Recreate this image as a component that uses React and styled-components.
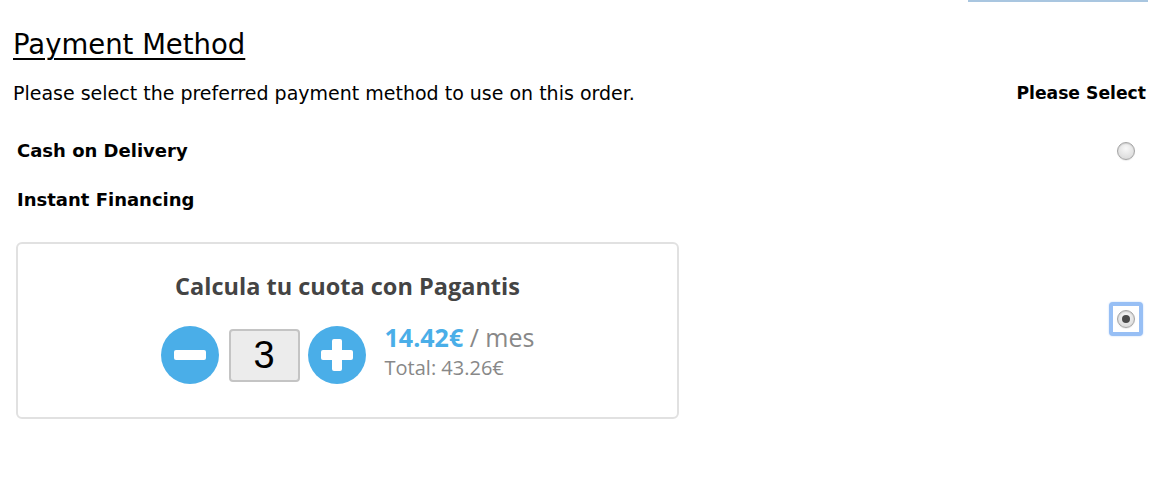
import React, { useState } from "react"
import styled, { createGlobalStyle } from "styled-components"

const GlobalStyle = createGlobalStyle`
  body {
    margin: 0;
    background: #fff;
    font-family: "DejaVu Sans", "Liberation Sans", sans-serif;
    color: #000;
  }
`

const Page = styled.div`
  padding: 0 12px 0 13px;
`

const TopLine = styled.div`
  height: 2px;
  width: 180px;
  margin-left: auto;
  background: #a9c6e0;
`

const Heading = styled.h2`
  margin: 26px 0 0;
  font-size: 27.5px;
  font-weight: normal;
  text-decoration: underline;
  text-decoration-thickness: 2px;
  text-underline-offset: 4px;
  line-height: 32px;
`

const InfoRow = styled.div`
  display: flex;
  justify-content: space-between;
  align-items: center;
  margin-top: 22px;
  font-size: 19px;
  line-height: 22px;
`

const SelectHint = styled.span`
  font-weight: bold;
  font-size: 17.2px;
  margin-right: 2px;
`

const OptionRow = styled.div`
  display: flex;
  justify-content: space-between;
  align-items: center;
  padding-left: 4px;
  margin-top: ${(p) => p.$gap}px;
  line-height: 22px;
`

const OptionLabel = styled.span`
  font-size: 18px;
  font-weight: bold;
`

const Radio = styled.span`
  width: 18px;
  height: 18px;
  border-radius: 50%;
  box-sizing: border-box;
  border: 1px solid #a4a4a4;
  background: radial-gradient(circle at 50% 35%, #f8f8f8, #d4d4d4);
  box-shadow: inset 0 1px 1px rgba(0, 0, 0, 0.12), 0 1px 1px rgba(0, 0, 0, 0.08);
  margin-right: ${(p) => p.$edge || 0}px;
  display: flex;
  align-items: center;
  justify-content: center;
  flex-shrink: 0;
`

const RadioDot = styled.span`
  width: 8px;
  height: 8px;
  border-radius: 50%;
  background: #4a4a4a;
`

const BoxRow = styled.div`
  display: flex;
  justify-content: space-between;
  align-items: center;
  padding-left: 3px;
  margin-top: 31px;
`

const FocusRing = styled.span`
  padding: 4px;
  border: 4px solid #97bff5;
  border-radius: 4px;
  background: #fff;
  box-shadow: 0 0 2px #b8d4fa;
  margin: 0 5px 24px 0;
  display: flex;
`

const FinancingBox = styled.div`
  width: 663px;
  box-sizing: border-box;
  border: 2px solid #e1e1e1;
  border-radius: 6px;
  padding: 26px 0 33px;
  font-family: "Open Sans", "Liberation Sans", sans-serif;
  display: flex;
  flex-direction: column;
  align-items: center;
`

const BoxTitle = styled.div`
  font-size: 23.5px;
  line-height: 32px;
  font-weight: bold;
  color: #444;
`

const Calculator = styled.div`
  display: flex;
  align-items: center;
  margin-top: 24px;
`

const CircleButton = styled.button`
  width: 58px;
  height: 58px;
  border-radius: 50%;
  border: none;
  padding: 0;
  background: #4aaee8;
  display: flex;
  align-items: center;
  justify-content: center;
  cursor: pointer;
`

const CountBox = styled.div`
  width: 71px;
  height: 53px;
  box-sizing: border-box;
  margin: 0 8px 0 10px;
  border: 2px solid #c4c4c4;
  border-radius: 4px;
  background: #ececec;
  display: flex;
  align-items: center;
  justify-content: center;
  font-family: "Liberation Sans", Arial, sans-serif;
  font-size: 38px;
  color: #000;
`

const Amounts = styled.div`
  margin-left: 19px;
  align-self: flex-start;
  display: flex;
  flex-direction: column;
`

const Monthly = styled.div`
  font-size: 25px;
  color: #888;
  line-height: 22px;
`

const Price = styled.span`
  color: #4aaee8;
  font-weight: bold;
`

const Total = styled.div`
  font-size: 20px;
  color: #888;
  line-height: 20px;
  margin-top: 10px;
`

const Bar = ({ vertical }) => (
  <svg width="34" height="34" viewBox="0 0 34 34">
    <rect x="1" y="12" width="32" height="10" rx="2" fill="#fff" />
    {vertical && <rect x="12" y="1" width="10" height="32" rx="2" fill="#fff" />}
  </svg>
)

export default function App() {
  const [count, setCount] = useState(3)
  const monthly = 14.42
  return (
    <Page>
      <GlobalStyle />
      <TopLine />
      <Heading>Payment Method</Heading>
      <InfoRow>
        <span>Please select the preferred payment method to use on this order.</span>
        <SelectHint>Please Select</SelectHint>
      </InfoRow>
      <OptionRow $gap={36}>
        <OptionLabel>Cash on Delivery</OptionLabel>
        <Radio $edge={13} />
      </OptionRow>
      <OptionRow $gap={27}>
        <OptionLabel>Instant Financing</OptionLabel>
      </OptionRow>
      <BoxRow>
        <FinancingBox>
          <BoxTitle>Calcula tu cuota con Pagantis</BoxTitle>
          <Calculator>
            <CircleButton onClick={() => setCount(Math.max(1, count - 1))}>
              <Bar />
            </CircleButton>
            <CountBox>{count}</CountBox>
            <CircleButton onClick={() => setCount(count + 1)}>
              <Bar vertical />
            </CircleButton>
            <Amounts>
              <Monthly>
                <Price>{monthly.toFixed(2)}€</Price> / mes
              </Monthly>
              <Total>Total: 43.26€</Total>
            </Amounts>
          </Calculator>
        </FinancingBox>
        <FocusRing>
          <Radio>
            <RadioDot />
          </Radio>
        </FocusRing>
      </BoxRow>
    </Page>
  )
}
